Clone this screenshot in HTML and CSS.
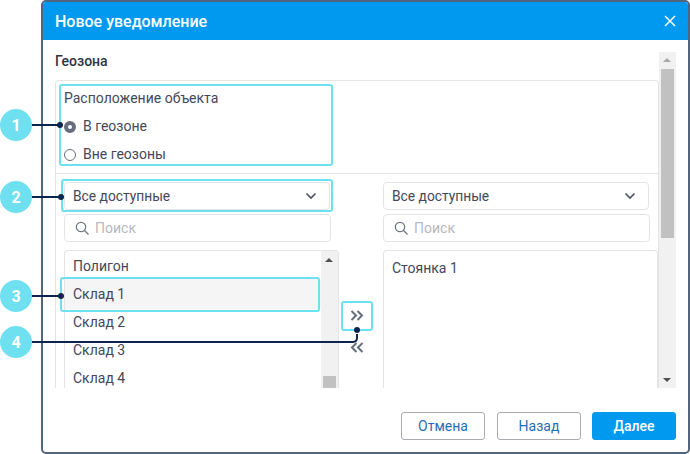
FILE: index.html
```html
<!DOCTYPE html>
<html lang="ru">
<head>
<meta charset="utf-8">
<title>Новое уведомление</title>
<link rel="stylesheet" href="styles.css">
</head>
<body>
<div class="dialog">
  <header class="head">
    <span class="title">Новое уведомление</span>
    <svg class="close" width="12" height="12" viewBox="0 0 12 12"><path d="M1 1l10 10M11 1L1 11" stroke="#fff" stroke-width="1.5" fill="none"/></svg>
  </header>
  <div class="body">
    <div class="scroll-area">
      <div class="content">
        <div class="section-title">Геозона</div>
        <div class="panel">
          <div class="location">
            <div class="loc-title">Расположение объекта</div>
            <label class="radio"><span class="dot on"></span><span class="radio-text">В геозоне</span></label>
            <label class="radio"><span class="dot"></span><span class="radio-text">Вне геозоны</span></label>
          </div>
          <div class="columns">
            <div class="col col-left">
              <div class="select"><span>Все доступные</span><svg width="12" height="8" viewBox="0 0 12 8"><path d="M1.500 1.500L6 6l4.500-4.500" stroke="#4a5060" stroke-width="1.600" fill="none"/></svg></div>
              <div class="search"><svg width="15" height="15" viewBox="0 0 15 15"><circle cx="6" cy="6" r="4.700" stroke="#6f7480" stroke-width="1.200" fill="none"/><path d="M9.500 9.500l4 4" stroke="#6f7480" stroke-width="1.300"/></svg><span>Поиск</span></div>
              <div class="list list-left">
                <div class="items">
                  <div class="item">Полигон</div>
                  <div class="item selected">Склад 1</div>
                  <div class="item">Склад 2</div>
                  <div class="item">Склад 3</div>
                  <div class="item">Склад 4</div>
                </div>
                <div class="bar bar-inner">
                  <span class="arrow up dark"></span>
                  <span class="thumb-low"></span>
                </div>
              </div>
            </div>
            <div class="mover">
              <svg width="14" height="11" viewBox="0 0 14 11"><path d="M1.500 1l4.500 4.500L1.500 10M7.500 1l4.500 4.500L7.500 10" stroke="#666d7c" stroke-width="2" fill="none"/></svg>
              <svg width="14" height="11" viewBox="0 0 14 11"><path d="M6.500 1L2 5.500 6.500 10M12.500 1L8 5.500 12.500 10" stroke="#666d7c" stroke-width="2" fill="none"/></svg>
            </div>
            <div class="col col-right">
              <div class="select"><span>Все доступные</span><svg width="12" height="8" viewBox="0 0 12 8"><path d="M1.500 1.500L6 6l4.500-4.500" stroke="#4a5060" stroke-width="1.600" fill="none"/></svg></div>
              <div class="search"><svg width="15" height="15" viewBox="0 0 15 15"><circle cx="6" cy="6" r="4.700" stroke="#6f7480" stroke-width="1.200" fill="none"/><path d="M9.500 9.500l4 4" stroke="#6f7480" stroke-width="1.300"/></svg><span>Поиск</span></div>
              <div class="list list-right"><div class="item first">Стоянка 1</div></div>
            </div>
          </div>
        </div>
      </div>
      <div class="bar bar-outer">
        <span class="arrow up"></span>
        <span class="thumb-high"></span>
        <span class="arrow down dark"></span>
      </div>
    </div>
    <footer class="foot">
      <button class="btn">Отмена</button>
      <button class="btn">Назад</button>
      <button class="btn primary">Далее</button>
    </footer>
  </div>
</div>

<div class="hl hl-location"></div>
<div class="hl hl-select"></div>
<div class="hl hl-item"></div>
<div class="hl hl-mover"></div>

<div class="badge b1">1</div>
<div class="badge b2">2</div>
<div class="badge b3">3</div>
<div class="badge b4">4</div>
<div class="line l1"></div>
<div class="line l2"></div>
<div class="line l3"></div>
<div class="line l4"></div>
<div class="line-corner"></div>
<div class="pin p1"></div>
<div class="pin p2"></div>
<div class="pin p3"></div>
<div class="pin p4"></div>
</body>
</html>
```
FILE: styles.css
```css
* { box-sizing: border-box; }
html, body { margin: 0; height: 100%; background: #fff; overflow: hidden; }
body { font-family: Roboto, "Liberation Sans", sans-serif; font-size: 14px; color: #43485a; position: relative; }

.dialog {
  width: 649px; height: 454px; margin-left: 41px;
  border: 2px solid #53647f; border-radius: 5px;
  display: flex; flex-direction: column; overflow: hidden; background: #fff;
}
.head {
  height: 38px; flex: none; background: #0099f0; color: #fff;
  display: flex; align-items: center; justify-content: space-between;
  padding: 0 12px;
}
.title { font-size: 16px; font-weight: 500; }
.body { flex: 1; display: flex; flex-direction: column; min-height: 0; }
.scroll-area { height: 348px; flex: none; display: flex; padding: 12px 12px 0; overflow: hidden; }
.content { width: 604px; flex: none; }
.section-title { font-weight: 500; height: 28px; line-height: 18px; color: #2e3442; font-size: 14px; }
.panel {
  width: 604px; border: 1px solid #e4e4e4; border-bottom: 0; border-radius: 4px 4px 0 0;
  height: 320px;
}
.location { height: 93px; padding: 7px 8px 0; border-bottom: 1px solid #e4e4e4; }
.loc-title { height: 20px; line-height: 20px; }
.radio { display: flex; align-items: center; gap: 7px; height: 28px; }
.loc-title + .radio { margin-top: 5px; }
.radio-text { margin-bottom: 2px; }
.dot { width: 12px; height: 12px; border: 1px solid #666d7c; border-radius: 50%; background: #fff; }
.dot.on { border: 4px solid #666d7c; }

.columns { display: flex; padding-top: 8px; }
.col { display: flex; flex-direction: column; gap: 4px; }
.col-left { width: 275px; margin-left: 8px; }
.col-right { width: 275px; }
.select, .search {
  height: 28px; border: 1px solid #e4e4e4; border-radius: 4px;
  display: flex; align-items: center;
}
.select { width: 266px; padding: 0 12px 0 8px; justify-content: space-between; font-size: 13.800px; }
.search { width: 267px; padding: 0 8px 0 10px; gap: 5px; color: #b5b8c0; }
.list { margin-top: 4px; height: 138px; border: 1px solid #e4e4e4; border-bottom: 0; border-radius: 4px 4px 0 0; overflow: hidden; display: flex; }
.items { flex: 1; padding-top: 1px; }
.item { height: 28px; line-height: 28px; padding-left: 8px; }
.item.selected { height: 30px; line-height: 30px; margin: -1px 0; background: #f5f5f5; }
.item.first { margin-top: 3px; }
.list-right .item { flex: 1; }
.mover { width: 45px; margin-left: -1px; padding: 128px 7px 0 0; display: flex; flex-direction: column; align-items: center; gap: 21px; }

.bar { background: #f1f1f1; flex: none; position: relative; display: flex; flex-direction: column; align-items: center; }
.bar-inner { width: 17px; }
.bar-outer { width: 17px; height: 336px; }
.arrow { position: absolute; left: 4px; width: 0; height: 0; border-left: 4px solid transparent; border-right: 4px solid transparent; }
.arrow.up { top: 6px; border-bottom: 4px solid #a8a8a8; }
.arrow.up.dark { top: 7px; border-bottom-color: #505050; }
.arrow.down { bottom: 6px; border-top: 4px solid #505050; }
.thumb-high { position: absolute; top: 17px; left: 2px; width: 13px; height: 169px; background: #c1c1c1; }
.thumb-low { position: absolute; bottom: 0; left: 2px; width: 13px; height: 12px; background: #c1c1c1; }

.foot { flex: 1; display: flex; justify-content: flex-end; gap: 12px; padding: 24px 12px 0 0; }
.btn {
  width: 84px; height: 28px; font: 14px Roboto, "Liberation Sans", sans-serif;
  color: #1f6fb5; background: #fff; border: 1px solid #a9abb0; border-radius: 3px; padding: 0;
}
.primary { background: #0099f0; border-color: #0099f0; color: #fff; font-weight: 500; margin-left: -1px; }

.hl { position: absolute; border: 2px solid #6fe0f0; border-radius: 3px; }
.hl-location { left: 59px; top: 84px; width: 274px; height: 82px; }
.hl-select { left: 61px; top: 179px; width: 272px; height: 33px; }
.hl-item { left: 60px; top: 277px; width: 260px; height: 35px; }
.hl-mover { left: 341px; top: 301px; width: 32px; height: 30px; }

.badge {
  position: absolute; left: 0; width: 32px; height: 32px; border-radius: 50%;
  background: #6fe0f0; color: #fff; font-weight: 700; font-size: 16px;
  display: flex; align-items: center; justify-content: center;
}
.b1 { top: 109px; } .b2 { top: 181px; } .b3 { top: 280px; } .b4 { top: 326px; }
.line { position: absolute; left: 32px; height: 2px; background: #0b2550; }
.l1 { top: 124px; width: 26px; } .l2 { top: 196px; width: 26px; } .l3 { top: 295px; width: 28px; }
.l4 { top: 341px; width: 318px; }
.line-corner {
  position: absolute; left: 349px; top: 334px; width: 9px; height: 9px;
  border-right: 2px solid #0b2550; border-bottom: 2px solid #0b2550; border-bottom-right-radius: 5px;
}
.pin { position: absolute; width: 6px; height: 6px; border-radius: 50%; background: #0b2550; }
.p1 { left: 57px; top: 122px; } .p2 { left: 58px; top: 194px; } .p3 { left: 58px; top: 293px; } .p4 { left: 354px; top: 327px; }
```
